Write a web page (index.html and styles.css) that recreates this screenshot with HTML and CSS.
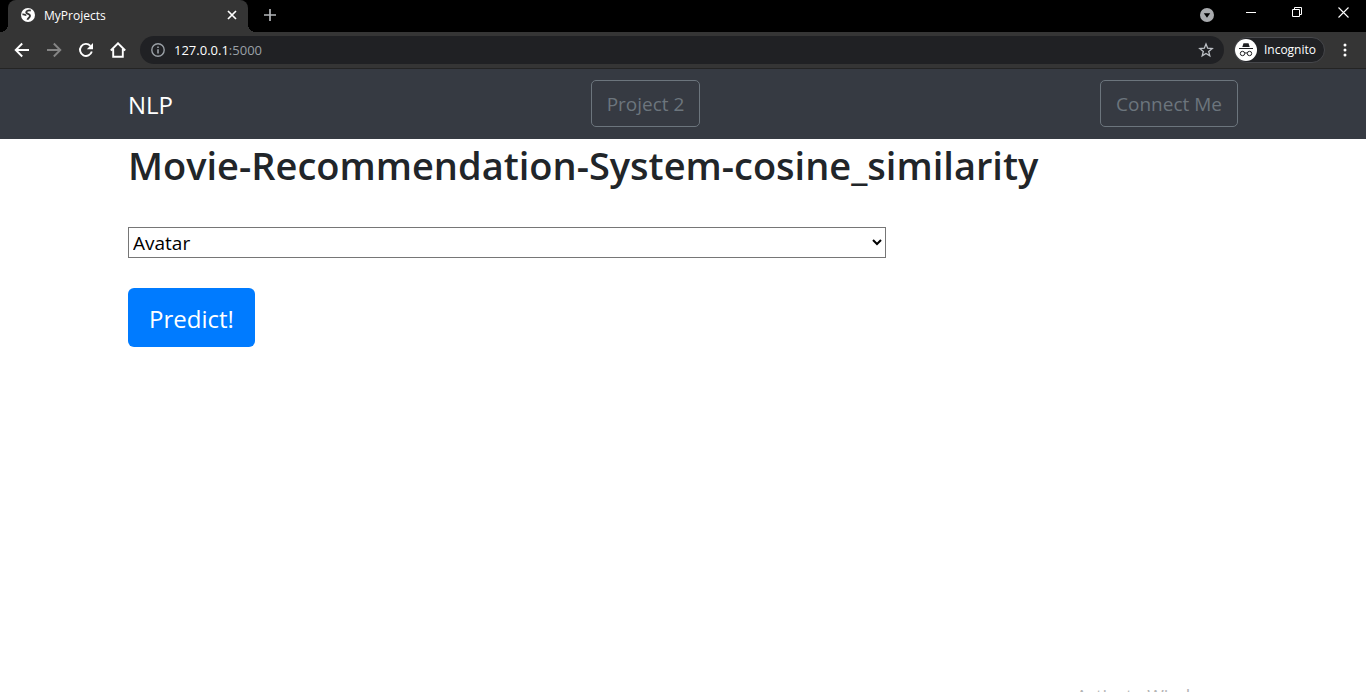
FILE: index.html
```html
<!DOCTYPE html>
<html lang="en">
<head>
<meta charset="utf-8">
<meta name="viewport" content="width=device-width, initial-scale=1">
<title>MyProjects</title>
<link rel="stylesheet" href="styles.css">
</head>
<body>
<div class="browser">
  <div class="tab-strip">
    <div class="tab">
      <svg class="favicon" width="16" height="16" viewBox="0 0 16 16" aria-hidden="true"><circle cx="8" cy="8" r="7" fill="#fff"/><path d="M10.800 3.600C9.200 3.200 6.300 3.400 6.200 5.200C6.100 7.200 9.800 6.400 10 8.600C10.200 10.600 8.200 10.600 7.400 12.800M2.400 7.400C3.600 7.300 5.400 7.500 6 8.700" fill="none" stroke="#353535" stroke-width="1.900"/></svg>
      <span class="tab-title">MyProjects</span>
      <button class="plain tab-close" aria-label="Close tab"><svg width="10" height="10" viewBox="0 0 10 10"><path d="M1 1l8 8M9 1L1 9" stroke="#fff" stroke-width="1.700"/></svg></button>
    </div>
    <button class="plain new-tab" aria-label="New tab"><svg width="12" height="12" viewBox="0 0 12 12"><path d="M6 0v12M0 6h12" stroke="#b4b6b9" stroke-width="1.700"/></svg></button>
    <div class="window-controls">
      <button class="plain tab-search" aria-label="Search tabs"><svg width="14" height="14" viewBox="0 0 14 14"><circle cx="7" cy="7" r="7" fill="#a9abae"/><path d="M3.800 5.200h6.400L7 9.700z" fill="#000"/></svg></button>
      <button class="plain control" aria-label="Minimize"><svg width="10" height="10" viewBox="0 0 10 10"><path d="M0 4.500h10" stroke="#fff"/></svg></button>
      <button class="plain control" aria-label="Restore"><svg width="11" height="11" viewBox="0 0 11 11"><path d="M.5 2.500h7v7h-7zM2.500 2.500v-2h7v7h-2" fill="none" stroke="#fff"/></svg></button>
      <button class="plain control" aria-label="Close"><svg width="11" height="11" viewBox="0 0 11 11"><path d="M.5.500l10 10M10.500.500l-10 10" stroke="#fff" stroke-width="1.100"/></svg></button>
    </div>
  </div>
  <div class="toolbar">
    <button class="plain nav-button" aria-label="Back"><svg width="16" height="16" viewBox="0 0 16 16"><path d="M15 8H2M8.200 1.500L1.700 8l6.500 6.500" fill="none" stroke="#fff" stroke-width="1.900"/></svg></button>
    <button class="plain nav-button" aria-label="Forward"><svg width="16" height="16" viewBox="0 0 16 16"><path d="M1 8h13M7.800 1.500L14.300 8l-6.500 6.500" fill="none" stroke="#858585" stroke-width="1.900"/></svg></button>
    <button class="plain nav-button" aria-label="Reload"><svg width="16" height="16" viewBox="0 0 16 16"><path d="M13.800 9.500A6 6 0 1 1 12.400 3.800" fill="none" stroke="#fff" stroke-width="1.900"/><path d="M15 1v6.200H8.800z" fill="#fff"/></svg></button>
    <button class="plain nav-button" aria-label="Home"><svg width="16" height="16" viewBox="0 0 16 16"><path d="M.8 8.500L8 1.300l7.200 7.200M3.200 7v7.800h9.600V7" fill="none" stroke="#fff" stroke-width="1.900"/></svg></button>
    <div class="address-bar">
      <svg width="14" height="14" viewBox="0 0 14 14" aria-hidden="true"><circle cx="7" cy="7" r="6.200" fill="none" stroke="#9aa0a6" stroke-width="1.400"/><path d="M7 6.200v4.300M7 3.400v1.600" stroke="#9aa0a6" stroke-width="1.600"/></svg>
      <span class="address">127.0.0.1<span class="port">:5000</span></span>
      <button class="plain bookmark" aria-label="Bookmark this page"><svg width="16" height="16" viewBox="0 0 16 16"><path d="M8 2l1.700 4.200 4.500.3-3.500 2.900 1.100 4.400L8 11.400l-3.800 2.400 1.100-4.400L1.800 6.500l4.500-.3z" fill="none" stroke="#bdc1c6" stroke-width="1.300"/></svg></button>
    </div>
    <button class="plain incognito">
      <svg width="22" height="22" viewBox="0 0 22 22" aria-hidden="true"><circle cx="11" cy="11" r="11" fill="#fff"/><path d="M7.300 8l1.200-3.700h5L14.700 8z" fill="#202124"/><path d="M4 9.500h14" stroke="#202124"/><path d="M9.800 14.200q1.200-.8 2.400 0" fill="none" stroke="#202124"/><circle cx="7.500" cy="14.500" r="2.200" fill="none" stroke="#202124"/><circle cx="14.500" cy="14.500" r="2.200" fill="none" stroke="#202124"/></svg>
      <span>Incognito</span>
    </button>
    <button class="plain menu" aria-label="Menu"><svg width="4" height="14" viewBox="0 0 4 14"><g fill="#fff"><circle cx="2" cy="2" r="1.500"/><circle cx="2" cy="7" r="1.500"/><circle cx="2" cy="12" r="1.500"/></g></svg></button>
  </div>
</div>
<header class="navbar">
  <nav class="container nav-row">
    <a class="brand" href="#">NLP</a>
    <a class="outline-button" href="#">Project 2</a>
    <a class="outline-button" href="#">Connect Me</a>
  </nav>
</header>
<main class="container">
  <h1>Movie-Recommendation-System-cosine_similarity</h1>
  <form>
    <select class="movie" aria-label="Movie"><option>Avatar</option></select>
    <button class="predict" type="button">Predict!</button>
  </form>
</main>
<div class="watermark">Activate Windows</div>
</body>
</html>
```
FILE: styles.css
```css
* {
  box-sizing: border-box;
}

body {
  position: relative;
  height: 100vh;
  margin: 0;
  overflow: hidden;
  background: #fff;
  color: #212529;
  font-family: "Open Sans", "Noto Sans", sans-serif;
  font-size: 20px;
}

svg {
  display: block;
  flex: none;
}

.plain {
  display: flex;
  align-items: center;
  justify-content: center;
  padding: 0;
  border: 0;
  background: none;
  color: #fff;
  font-family: inherit;
}

.browser {
  background: #353535;
  color: #fff;
  font-size: 12px;
}

.tab-strip {
  display: flex;
  height: 32px;
  padding-left: 8px;
  background: #000;
}

.tab {
  position: relative;
  display: flex;
  align-items: center;
  width: 240px;
  padding: 0 11px 2px 12px;
  border-radius: 8px 8px 0 0;
  background: #353535;
}

.tab::before,
.tab::after {
  content: "";
  position: absolute;
  bottom: 0;
  width: 8px;
  height: 8px;
}

.tab::before {
  right: 100%;
  background: radial-gradient(circle at 0 0, #000 8px, #353535 8px);
}

.tab::after {
  left: 100%;
  background: radial-gradient(circle at 100% 0, #000 8px, #353535 8px);
}

.tab-title {
  flex: 1;
  margin-left: 8px;
  font-size: 12px;
}

.new-tab {
  width: 44px;
  height: 30px;
}

.window-controls {
  display: flex;
  height: 26px;
  margin-left: auto;
}

.tab-search {
  width: 42px;
  height: 30px;
}

.control {
  width: 46px;
  height: 25px;
}

.toolbar {
  display: flex;
  align-items: center;
  height: 37px;
  padding: 0 16px 1px 6px;
  border-bottom: 1px solid #242424;
}

.nav-button {
  width: 32px;
  height: 32px;
}

.address-bar {
  display: flex;
  flex: 1;
  align-items: center;
  height: 28px;
  margin-left: 6px;
  padding: 0 10px 0 11px;
  border-radius: 14px;
  background: #202124;
}

.address {
  flex: 1;
  margin-left: 9px;
  font-size: 13px;
}

.port {
  color: #9aa0a6;
}

.incognito {
  height: 26px;
  margin-left: 10px;
  padding: 0 8px 0 0;
  gap: 7px;
  border: 1px solid #46474b;
  border-radius: 13px;
  background: #202124;
  font-size: 12px;
}

.menu {
  width: 10px;
  height: 24px;
  margin-left: 15px;
}

.container {
  width: 100%;
  max-width: 1110px;
  margin: 0 auto;
}

.navbar {
  background: #363a42;
}

.nav-row {
  display: flex;
  align-items: center;
  justify-content: space-between;
  height: 70px;
  padding-bottom: 1px;
}

.brand {
  margin-right: 18px;
  padding-top: 2px;
  color: #fff;
  font-size: 24px;
  text-decoration: none;
}

.outline-button {
  padding: 9px 15px 7px;
  border: 1px solid #6c757d;
  border-radius: 5px;
  color: #6c757d;
  font-size: 19px;
  line-height: 29px;
  text-decoration: none;
}

h1 {
  margin: 0 0 36px;
  font-size: 38px;
  font-weight: 600;
  line-height: 52px;
}

.movie {
  display: block;
  width: 758px;
  max-width: 100%;
  height: 31px;
  border: 1px solid #767676;
  border-radius: 0;
  background-color: #fff;
  color: #000;
  font-family: inherit;
  font-size: 19px;
}

.predict {
  margin-top: 30px;
  padding: 11px 21px 9px;
  border: 0;
  border-radius: 6px;
  background: #007bff;
  color: #fff;
  font-family: inherit;
  font-size: 24px;
  line-height: 39px;
}

.watermark {
  position: absolute;
  top: 684px;
  left: 1076px;
  color: #b4b4b4;
  font-size: 18px;
  line-height: 24px;
}
```
